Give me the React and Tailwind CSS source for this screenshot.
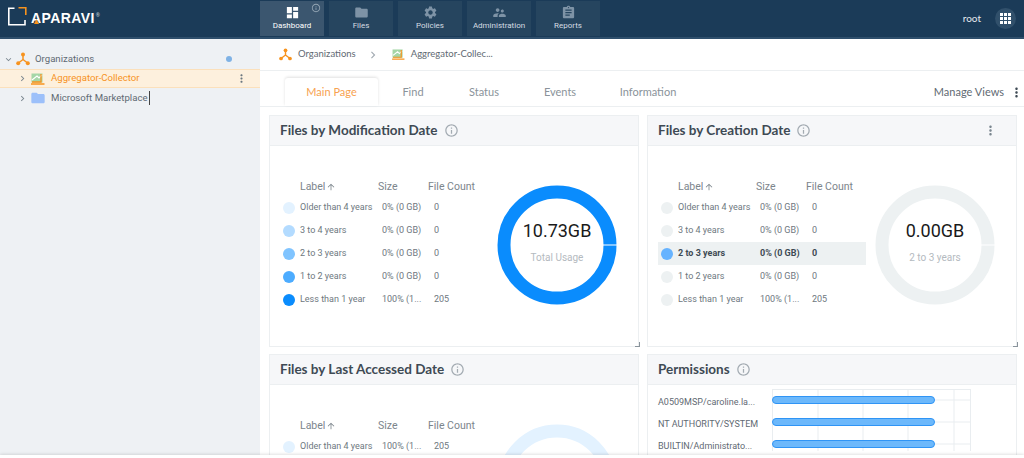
import {MdDashboard, MdFolder, MdSettings, MdSupervisorAccount, MdAssignment, MdInfoOutline, MdMoreVert, MdChevronRight, MdExpandMore, MdArrowUpward} from "react-icons/md";

const navItems = [
    {label: "Dashboard", icon: MdDashboard, active: true},
    {label: "Files", icon: MdFolder},
    {label: "Policies", icon: MdSettings},
    {label: "Administration", icon: MdSupervisorAccount},
    {label: "Reports", icon: MdAssignment},
];

const blueDots = ["bg-[#e3f2ff]", "bg-[#b3dbff]", "bg-[#80c4ff]", "bg-[#4dacff]", "bg-[#0a8cfd]"];
const grayDots = ["bg-[#edf1f2]", "bg-[#edf1f2]", "bg-[#66b3ff]", "bg-[#edf1f2]", "bg-[#edf1f2]"];

const rows = [
    {label: "Older than 4 years", size: "0% (0 GB)", count: "0"},
    {label: "3 to 4 years", size: "0% (0 GB)", count: "0"},
    {label: "2 to 3 years", size: "0% (0 GB)", count: "0"},
    {label: "1 to 2 years", size: "0% (0 GB)", count: "0"},
    {label: "Less than 1 year", size: "100% (1...", count: "205"},
];

const titleFont = "font-['Lato',sans-serif]";
const bodyFont = "font-['Roboto',sans-serif]";

const OrgIcon = ({className}) => (
    <svg viewBox="0 0 14 14" className={className}>
        <path d="M7 3 L7 7.5 L2.5 11 M7 7.5 L11.5 11" fill="none" stroke="#f7931e" strokeWidth="1.5" />
        <circle cx="7" cy="2.5" r="2" fill="#f7931e" />
        <circle cx="2.2" cy="11.3" r="2" fill="#f7931e" />
        <circle cx="11.8" cy="11.3" r="2" fill="#f7931e" />
    </svg>
);

const CollectorIcon = ({className}) => (
    <svg viewBox="0 0 14 12" className={className}>
        <rect x="0.5" y="0.5" width="11" height="9" fill="#a5d6a7" />
        <path d="M1 7 L6 3 L8 5 L11 2" fill="none" stroke="#fff" strokeWidth="1.2" />
        <path d="M10 1 L10 9 L1 9 M0 11 L13.5 11" fill="none" stroke="#f7931e" strokeWidth="1.3" />
    </svg>
);

const Logo = () => (
    <div className="relative flex items-end ml-[8px] mt-[7px]">
        <svg viewBox="0 0 19 19" className="w-[19px] h-[19px]">
            <path d="M6.5 1.2 L0.8 1.2 L0.8 17.8 L17 17.8 L17 13" fill="none" stroke="#fff" strokeWidth="1.6" />
            <path d="M10.5 0.8 L17.8 0.8 L17.8 8" fill="none" stroke="#f7931e" strokeWidth="1.6" />
        </svg>
        <span className="ml-[4px] text-white text-[14px] leading-[15px] font-bold tracking-[0.4px] font-['Liberation_Sans',sans-serif]">APARAVI</span>
        <span className="ml-[1px] mb-[8px] text-[#c5ced6] text-[5px] leading-[5px]">®</span>
        <svg viewBox="0 0 6 6" className="absolute left-[26px] bottom-[2px] w-[5px] h-[5px]">
            <path d="M3 0 L6 6 L0 6 Z" fill="#f7931e" />
        </svg>
    </div>
);

const Donut = ({color, title, sub}) => (
    <div className="relative w-[120px] h-[120px] shrink-0">
        <svg viewBox="0 0 120 120" className="w-full h-full">
            <circle cx="60" cy="60" r="53" fill="none" stroke={color} strokeWidth="13" />
            <rect x="106" y="59.5" width="14" height="1" fill="#fff" />
        </svg>
        <div className={`absolute inset-0 flex flex-col items-center justify-center ${bodyFont}`}>
            <span className="text-[18px] leading-[22px] text-[#1a1a1a] mt-[-6px]">{title}</span>
            <span className="text-[10px] leading-[13px] mt-[9px] text-[#b4bac0]">{sub}</span>
        </div>
    </div>
);

const CardHeader = ({title, menu}) => (
    <div className="h-[30px] shrink-0 flex items-center pl-[10px] pr-[18px] bg-[#f6f7f9] border-b border-[#eceff1]">
        <span className={`text-[13.5px] font-bold text-[#3e4a54] ${titleFont}`}>{title}</span>
        <MdInfoOutline className="ml-[6px] text-[15px] text-[#a3abb2]" />
        {menu && <MdMoreVert className="ml-auto text-[15px] text-[#7b8790]" />}
    </div>
);

const LegendTable = ({dots, rowData, selected}) => (
    <div className={`text-[9px] text-[#6e7880] ${bodyFont}`}>
        <div className="grid grid-cols-[12px_83px_50px_auto] h-[19px] pt-[1px] items-center pl-[3px] text-[10.5px] text-[#7c858c]">
            <span />
            <span className="pl-[5px] flex items-center">Label <MdArrowUpward className="ml-[1px] text-[10px]" /></span>
            <span>Size</span>
            <span>File Count</span>
        </div>
        {rowData.map((r, i) => (
            <div key={r.label} className={`grid grid-cols-[12px_83px_50px_auto] h-[23px] items-center pl-[3px] ${i === selected ? "bg-[#edf1f2] font-bold text-[#3e4a54]" : ""}`}>
                <span className={`w-[12px] h-[12px] rounded-full ${dots[i]}`} />
                <span className="pl-[5px] whitespace-nowrap">{r.label}</span>
                <span className="pl-[4px] whitespace-nowrap">{r.size}</span>
                <span className="pl-[6px]">{r.count}</span>
            </div>
        ))}
    </div>
);

const UsageCard = ({title, menu, dots, selected, color, value, sub}) => (
    <div className="h-[232px] flex flex-col border border-[#eceff1] bg-white">
        <CardHeader title={title} menu={menu} />
        <div className="relative flex-1 flex pl-[10px] pt-[31px]">
            <div className="w-[208px]">
                <LegendTable dots={dots} rowData={rows} selected={selected} />
            </div>
            <div className="ml-[9px] mt-[8px]">
                <Donut color={color} title={value} sub={sub} />
            </div>
            <span className="absolute right-[-2px] bottom-[-1px] w-[5px] h-[5px] border-r border-b border-[#8a949c]" />
        </div>
    </div>
);

const BarChart = () => (
    <svg viewBox="0 0 200 62" className="w-[200px] h-[62px] overflow-hidden">
        {[0.5, 46, 91, 136, 182, 198.5].map((x) => (
            <line key={x} x1={x} y1="0" x2={x} y2="62" stroke="#e9edf0" />
        ))}
        {[0.5, 11, 33, 55].map((y) => (
            <line key={y} x1="0" y1={y} x2="199" y2={y} stroke="#e9edf0" />
        ))}
        {[7.5, 29.5, 51.5].map((y) => (
            <rect key={y} x="0.5" y={y} width="162" height="7" rx="3.5" fill="#6cb8fb" stroke="#2f94f5" />
        ))}
    </svg>
);

const App = () => {
    return (
        <div className="w-[1024px] h-[458px] flex flex-col overflow-hidden bg-white">
            <header className="h-[39px] shrink-0 flex bg-[#1b3b58] border-b-2 border-[#2f4f6c]">
                <div className="w-[260px] shrink-0">
                    <Logo />
                </div>
                <nav className="flex gap-[5px] pt-[1px]">
                    {navItems.map((item) => (
                        <div key={item.label} className={`relative w-[64px] h-[35px] flex flex-col items-center pt-[4px] font-['Roboto',sans-serif] text-[8px] leading-[10px] ${item.active ? "bg-[#3b566f] text-white" : "bg-[#26455f] text-[#d5dce2]"}`}>
                            <item.icon className={`text-[15px] mb-[1px] ${item.active ? "text-white" : "text-[#7e93a6]"}`} />
                            {item.label}
                            {item.active && <MdInfoOutline className="absolute top-[2px] right-[3px] text-[10px] text-[#93a4b3]" />}
                        </div>
                    ))}
                </nav>
                <div className="ml-auto flex items-center pr-[8px]">
                    <span className="text-[10px] text-[#e4e9ed] font-['Lato',sans-serif]">root</span>
                    <span className="ml-[14px] w-[21px] h-[21px] rounded-full bg-[#31506b] grid grid-cols-3 gap-[1px] p-[5px]">
                        {Array.from({length: 9}).map((_, i) => (
                            <span key={i} className="bg-white" />
                        ))}
                    </span>
                </div>
            </header>

            <div className="flex-1 min-h-0 flex">
                <aside className="w-[260px] shrink-0 bg-[#eef1f4] pt-[10px] font-['Roboto',sans-serif] text-[9.6px] text-[#5f6a73]">
                    <div className="h-[20px] flex items-center pl-[3px]">
                        <MdExpandMore className="text-[11px] text-[#7b8790]" />
                        <OrgIcon className="w-[14px] h-[14px] ml-[2px]" />
                        <span className="ml-[5px]">Organizations</span>
                        <span className="ml-auto mr-[28px] w-[6px] h-[6px] rounded-full bg-[#7fb2e5]" />
                    </div>
                    <div className="h-[19px] flex items-center pl-[17px] bg-[#fdf0dd] border-y border-[#fbe0bb] text-[#f7931e]">
                        <MdChevronRight className="text-[11px] text-[#7b8790]" />
                        <CollectorIcon className="w-[14px] h-[12px] ml-[3px]" />
                        <span className="ml-[6px]">Aggregator-Collector</span>
                        <MdMoreVert className="ml-auto mr-[12px] text-[13px] text-[#6b7780]" />
                    </div>
                    <div className="h-[20px] flex items-center pl-[17px]">
                        <MdChevronRight className="text-[11px] text-[#7b8790]" />
                        <MdFolder className="text-[16px] ml-[2px] text-[#9cc0fa]" />
                        <span className="ml-[5px] border-r border-[#444] pr-[1px]">Microsoft Marketplace</span>
                    </div>
                </aside>

                <main className="flex-1 min-w-0 flex flex-col overflow-hidden">
                    <div className="h-[32px] shrink-0 flex items-center pl-[19px] border-b border-[#eceff1] text-[9.5px] text-[#5f6a73] font-['Lato',sans-serif]">
                        <OrgIcon className="w-[13px] h-[13px]" />
                        <span className="ml-[6px]">Organizations</span>
                        <MdChevronRight className="ml-[10px] text-[14px] text-[#a3abb2]" />
                        <CollectorIcon className="w-[13px] h-[11px] ml-[12px]" />
                        <span className="ml-[6px]">Aggregator-Collec...</span>
                    </div>
                    <div className="h-[36px] shrink-0 flex items-end pl-[25px] border-b border-[#eceff1] text-[11px] text-[#8a939a] font-['Lato',sans-serif]">
                        <div className="w-[93px] h-[28px] flex items-center justify-center bg-white rounded-t-[3px] shadow-[0_-1px_3px_rgba(0,0,0,0.12)] text-[#f7a250]">Main Page</div>
                        <div className="w-[70px] h-[28px] flex items-center justify-center">Find</div>
                        <div className="w-[72px] h-[28px] flex items-center justify-center">Status</div>
                        <div className="w-[80px] h-[28px] flex items-center justify-center">Events</div>
                        <div className="w-[96px] h-[28px] flex items-center justify-center">Information</div>
                        <div className="ml-auto h-[28px] flex items-center text-[#5f6a73]">
                            Manage Views
                            <MdMoreVert className="ml-[5px] text-[15px] text-[#3e4a54]" />
                        </div>
                    </div>
                    <div className="flex-1 min-h-0 overflow-hidden grid grid-cols-[370px_370px] gap-x-[8px] gap-y-[7px] content-start pl-[9px] pt-[8px]">
                        <UsageCard title="Files by Modification Date" dots={blueDots} color="#0a8cfd" value="10.73GB" sub="Total Usage" />
                        <UsageCard title="Files by Creation Date" menu dots={grayDots} selected={2} color="#edf1f2" value="0.00GB" sub="2 to 3 years" />

                        <div className="h-[232px] flex flex-col border border-[#eceff1] bg-white">
                            <CardHeader title="Files by Last Accessed Date" />
                            <div className="relative flex-1 flex pl-[10px] pt-[31px]">
                                <div className="w-[208px]">
                                    <LegendTable dots={blueDots} rowData={[{label: "Older than 4 years", size: "100% (1...", count: "205"}]} />
                                </div>
                                <div className="ml-[9px] mt-[8px]">
                                    <Donut color="#e3f2ff" title="" sub="" />
                                </div>
                            </div>
                        </div>
                        <div className="h-[232px] flex flex-col border border-[#eceff1] bg-white">
                            <CardHeader title="Permissions" />
                            <div className="flex pl-[10px] pt-[4px]">
                                <div className={`w-[114px] text-[9px] text-[#5f6a73] pt-[3px] ${bodyFont}`}>
                                    <div className="h-[22px] flex items-center">A0509MSP/caroline.la...</div>
                                    <div className="h-[22px] flex items-center">NT AUTHORITY/SYSTEM</div>
                                    <div className="h-[22px] flex items-center">BUILTIN/Administrato...</div>
                                </div>
                                <BarChart />
                            </div>
                        </div>
                    </div>
                </main>
            </div>
            <div className="h-[3px] shrink-0 bg-white shadow-[0_-1px_3px_rgba(0,0,0,0.12)] z-10" />
        </div>
    );
};

export default App;
